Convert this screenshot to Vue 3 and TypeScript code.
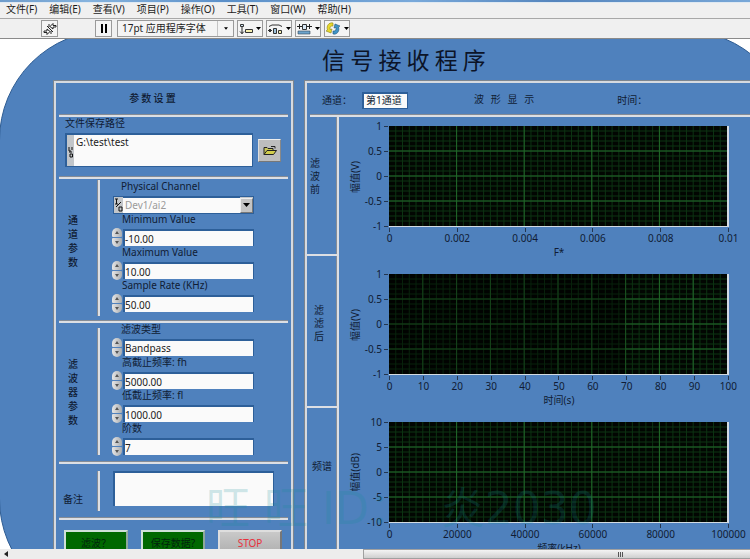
<script setup lang="ts">
import { reactive, ref } from 'vue'

interface NumField {
  id: string
  label: string
  value: string
  step: number
  digits: number
}

interface Chart {
  id: string
  yLabel: string
  xLabel: string
  yTicks: string[]
  xTicks: string[]
  faintUntil: number
}

const menus = ['文件(F)', '编辑(E)', '查看(V)', '项目(P)', '操作(O)', '工具(T)', '窗口(W)', '帮助(H)']

const channelFields = reactive<NumField[]>([
  { id: 'min', label: 'Minimum Value', value: '-10.00', step: 1, digits: 2 },
  { id: 'max', label: 'Maximum Value', value: '10.00', step: 1, digits: 2 },
  { id: 'rate', label: 'Sample Rate (KHz)', value: '50.00', step: 1, digits: 2 },
])

const filterFields = reactive<NumField[]>([
  { id: 'fh', label: '高截止频率: fh', value: '5000.00', step: 100, digits: 2 },
  { id: 'fl', label: '低截止频率: fl', value: '1000.00', step: 100, digits: 2 },
  { id: 'order', label: '阶数', value: '7', step: 1, digits: 0 },
])

const filterTypes = ['Lowpass', 'Highpass', 'Bandpass', 'Bandstop']
const filterType = ref('Bandpass')
const path = ref('G:\\test\\test')
const notes = ref('')
const displayTitle = '波   形   显   示'
const watermark = '旺 旺 ID：  炎2030'

function nudge(field: NumField, dir: number) {
  field.value = (Number(field.value) + dir * field.step).toFixed(field.digits)
}

function cycleType(dir: number) {
  const n = filterTypes.length
  filterType.value = filterTypes[(filterTypes.indexOf(filterType.value) + dir + n) % n]
}

const charts: Chart[] = [
  {
    id: 'raw',
    yLabel: '幅值(V)',
    xLabel: 'F*',
    yTicks: ['1', '0.5', '0', '-0.5', '-1'],
    xTicks: ['0', '0.002', '0.004', '0.006', '0.008', '0.01'],
    faintUntil: 0,
  },
  {
    id: 'filtered',
    yLabel: '幅值(V)',
    xLabel: '时间(s)',
    yTicks: ['1', '0.5', '0', '-0.5', '-1'],
    xTicks: ['0', '10', '20', '30', '40', '50', '60', '70', '80', '90', '100'],
    faintUntil: 70,
  },
  {
    id: 'spectrum',
    yLabel: '幅值(dB)',
    xLabel: '频率(kHz)',
    yTicks: ['10', '5', '0', '-5', '-10'],
    xTicks: ['0', '20000', '40000', '60000', '80000', '100000'],
    faintUntil: 0,
  },
]

const minorX = Array.from({ length: 49 }, (_, i) => (i + 1) * 2)
const minorY = Array.from({ length: 19 }, (_, i) => (i + 1) * 5)
const majorY = [25, 50, 75]

function majorX(c: Chart): number[] {
  const n = c.xTicks.length - 1
  return Array.from({ length: n - 1 }, (_, i) => ((i + 1) * 100) / n)
}
</script>

<template>
  <div class="window">
    <div class="title-edge"></div>
    <nav class="menu" aria-label="主菜单">
      <a v-for="m in menus" :key="m" href="#">{{ m }}</a>
    </nav>

    <div class="toolbar">
      <button class="tool run" aria-label="运行">
        <svg width="14" height="14" viewBox="0 0 14 14">
          <path d="M1 9h3V7l3 2.500-3 3v-2H1zM13 5h-3v2L7 4.500l3-3v2h3z" fill="#fff" stroke="#222" />
          <path d="M4 4l6 6M6 2v3M8 9v3" stroke="#222" fill="none" />
        </svg>
      </button>
      <button class="tool pause" aria-label="暂停">
        <svg width="8" height="9" viewBox="0 0 8 9"><path d="M1 0h2v9H1zM5 0h2v9H5z" fill="#000" /></svg>
      </button>
      <span class="font-pick">
        <select aria-label="字体">
          <option>17pt 应用程序字体</option>
        </select>
        <svg class="caret" width="5" height="3" viewBox="0 0 5 3"><path d="M0 0h5L2.500 3z" /></svg>
      </span>
      <button class="tool wide" aria-label="对齐对象">
        <svg width="14" height="12" viewBox="0 0 14 12">
          <path d="M1.500 1.500h3v2h-3z" fill="#cfe6f5" stroke="#333" />
          <path d="M3 4v7M1 8.500l2 2 2-2" stroke="#222" fill="none" />
          <path d="M6.500 6.500h7v3h-7z" fill="#f6efb0" stroke="#333" />
        </svg>
        <svg class="caret" width="5" height="3" viewBox="0 0 5 3"><path d="M0 0h5L2.500 3z" /></svg>
      </button>
      <button class="tool wide" aria-label="分布对象">
        <svg width="15" height="12" viewBox="0 0 15 12">
          <path d="M1 3.500L4 2h7l3 1.500M0 7.500h4" stroke="#333" fill="none" />
          <path d="M5.500 5.500h3v5h-3z" fill="#9fc3dc" stroke="#333" />
          <path d="M10.500 7.500h3v3h-3z" fill="#f6efb0" stroke="#333" />
          <path d="M1 6h2v3H1z" fill="#333" />
        </svg>
        <svg class="caret" width="5" height="3" viewBox="0 0 5 3"><path d="M0 0h5L2.500 3z" /></svg>
      </button>
      <button class="tool wide" aria-label="调整对象大小">
        <svg width="15" height="12" viewBox="0 0 15 12">
          <path d="M0 3.500h5M10 3.500h5M2.500 1v5M12.500 1v5" stroke="#222" fill="none" />
          <path d="M5.500 1.500h4v5h-4z" fill="#d8e8f4" stroke="#333" />
          <path d="M1 8h12v3H1z" fill="#6da4cc" stroke="#345" stroke-width=".6" />
        </svg>
        <svg class="caret" width="5" height="3" viewBox="0 0 5 3"><path d="M0 0h5L2.500 3z" /></svg>
      </button>
      <button class="tool wide" aria-label="重新排序">
        <svg width="15" height="13" viewBox="0 0 15 13">
          <path d="M7 1C3 0 0 4 1.500 8L0 9l5 2 1-4-2 .500C3.500 5 5 3.500 7 4z" fill="#e8d92c" stroke="#8a7f1a" stroke-width=".6" />
          <path d="M7 12c4 1 7-3 5.500-7L14 4 9 2 8 6l2-.500C10.500 8 9 9.500 7 9z" fill="#3f94c6" stroke="#1f5478" stroke-width=".6" />
        </svg>
        <svg class="caret" width="5" height="3" viewBox="0 0 5 3"><path d="M0 0h5L2.500 3z" /></svg>
      </button>
    </div>

    <main class="canvas">
      <div class="board">
        <h1>信 号 接 收 程 序</h1>
        <div class="columns">
          <section class="box settings">
            <h2>参 数 设 置</h2>
            <hr />
            <div class="path-section">
              <label for="path">文件保存路径</label>
              <div class="path-row">
                <span class="path-field">
                  <svg width="7" height="30" viewBox="0 0 7 30">
                    <path d="M2 12v4h2M5 12v3M3 19h2.500v3H3zM2 17h3" stroke="#111" fill="none" />
                  </svg>
                  <textarea id="path" v-model="path"></textarea>
                </span>
                <button class="browse" aria-label="浏览">
                  <svg width="14" height="11" viewBox="0 0 14 11">
                    <path d="M1 9.500V2.500h3l1 1h5v2" fill="#c9c65a" stroke="#222" />
                    <path d="M1 9.500L4 5.500h9.500L10.500 9.500z" fill="#d2ce4c" stroke="#222" />
                    <path d="M8 1.500h4v2" fill="none" stroke="#222" />
                  </svg>
                </button>
              </div>
            </div>
            <hr />

            <div class="group channel">
              <div class="side"><span>通道参数</span></div>
              <div class="fields">
                <div class="field">
                  <label for="dev">Physical Channel</label>
                  <span class="device">
                    <svg width="9" height="15" viewBox="0 0 9 15">
                      <path d="M1 1h3M2.500 1v5M1 6h3M2 9L7 4M5 9h3v4H5z" stroke="#111" fill="none" />
                    </svg>
                    <select id="dev">
                      <option>Dev1/ai2</option>
                    </select>
                    <span class="drop"><svg width="7" height="4" viewBox="0 0 7 4"><path d="M0 0h7L3.500 4z" /></svg></span>
                  </span>
                </div>
                <div v-for="f in channelFields" :key="f.id" class="field">
                  <label :for="f.id">{{ f.label }}</label>
                  <div class="spin-row">
                    <span class="spin">
                      <button aria-label="增大" @click="nudge(f, 1)"><svg width="4" height="3" viewBox="0 0 4 3"><path d="M2 0l2 3H0z" /></svg></button>
                      <button aria-label="减小" @click="nudge(f, -1)"><svg width="4" height="3" viewBox="0 0 4 3"><path d="M0 0h4L2 3z" /></svg></button>
                    </span>
                    <input :id="f.id" v-model="f.value" type="text" />
                  </div>
                </div>
              </div>
            </div>
            <hr />

            <div class="group filter">
              <div class="side"><span>滤波器参数</span></div>
              <div class="fields">
                <div class="field">
                  <label for="ftype">滤波类型</label>
                  <div class="spin-row">
                    <span class="spin">
                      <button aria-label="上一项" @click="cycleType(-1)"><svg width="4" height="3" viewBox="0 0 4 3"><path d="M2 0l2 3H0z" /></svg></button>
                      <button aria-label="下一项" @click="cycleType(1)"><svg width="4" height="3" viewBox="0 0 4 3"><path d="M0 0h4L2 3z" /></svg></button>
                    </span>
                    <select id="ftype" v-model="filterType">
                      <option v-for="t in filterTypes" :key="t">{{ t }}</option>
                    </select>
                  </div>
                </div>
                <div v-for="f in filterFields" :key="f.id" class="field">
                  <label :for="f.id">{{ f.label }}</label>
                  <div class="spin-row">
                    <span class="spin">
                      <button aria-label="增大" @click="nudge(f, 1)"><svg width="4" height="3" viewBox="0 0 4 3"><path d="M2 0l2 3H0z" /></svg></button>
                      <button aria-label="减小" @click="nudge(f, -1)"><svg width="4" height="3" viewBox="0 0 4 3"><path d="M0 0h4L2 3z" /></svg></button>
                    </span>
                    <input :id="f.id" v-model="f.value" type="text" />
                  </div>
                </div>
              </div>
            </div>
            <hr />

            <div class="group notes">
              <div class="side"><label for="notes">备注</label></div>
              <textarea id="notes" v-model="notes"></textarea>
            </div>
            <hr />

            <div class="actions">
              <button class="green">滤波？</button>
              <button class="green">保存数据?</button>
              <button class="stop">STOP</button>
            </div>
          </section>

          <section class="box display">
            <header>
              <label for="ch">通道：</label>
              <select id="ch">
                <option>第1通道</option>
              </select>
              <h2>{{ displayTitle }}</h2>
              <span>时间：</span>
            </header>
            <hr />
            <div class="plots">
              <div class="rail">
                <div class="cell before"><span>滤波前</span></div>
                <div class="cell after"><span>滤滤后</span></div>
                <div class="cell freq"><span>频谱</span></div>
              </div>
              <div class="charts">
                <figure v-for="c in charts" :key="c.id" class="chart">
                  <div class="y-label"><span>{{ c.yLabel }}</span></div>
                  <div class="y-ticks"><span v-for="t in c.yTicks" :key="t">{{ t }}</span></div>
                  <svg class="plot" viewBox="0 0 100 100" preserveAspectRatio="none">
                    <g class="minor">
                      <line v-for="x in minorX" :key="'x' + x" :x1="x" :x2="x" y1="0" y2="100" />
                      <line v-for="y in minorY" :key="'y' + y" x1="0" x2="100" :y1="y" :y2="y" />
                    </g>
                    <g class="major">
                      <line v-for="x in majorX(c)" :key="'x' + x" :x1="x" :x2="x" y1="0" y2="100" />
                      <line v-for="y in majorY" :key="'y' + y" x1="0" x2="100" :y1="y" :y2="y" />
                    </g>
                    <rect v-if="c.faintUntil" :width="c.faintUntil" height="100" fill="#000" opacity=".35" />
                  </svg>
                  <div class="x-ticks"><span v-for="t in c.xTicks" :key="t">{{ t }}</span></div>
                  <figcaption>{{ c.xLabel }}</figcaption>
                </figure>
              </div>
            </div>
          </section>
        </div>
      </div>
      <div class="watermark">{{ watermark }}</div>
    </main>

    <div class="scrollbar">
      <svg width="4" height="6" viewBox="0 0 4 6"><path d="M4 0v6L0 3z" fill="#222" /></svg>
      <div class="thumb"><i></i><i></i><i></i></div>
    </div>
  </div>
</template>

<style>
body {
  margin: 0;
  overflow: hidden;
}
</style>

<style scoped>
* {
  box-sizing: border-box;
}

.window {
  display: flex;
  flex-direction: column;
  height: 100vh;
  overflow: hidden;
  background: #f0f0f0;
  color: #101c34;
  font: 10px/13px 'Noto Sans', 'Noto Sans CJK SC', sans-serif;
}

button,
input,
select,
textarea {
  margin: 0;
  padding: 0;
  border: 0;
  border-radius: 0;
  font: inherit;
  color: inherit;
  appearance: none;
  outline: none;
}

svg {
  display: block;
  flex: none;
}

.title-edge {
  flex: none;
  height: 3px;
  background: linear-gradient(90deg, #6f9ccb, #86b3de 12%, #5b8fc8 30%, #79a9da 55%, #5585bd 74%, #79a8d8);
  border-bottom: 1px solid #dfe9f2;
}

.menu {
  display: flex;
  flex: none;
  gap: 12px;
  height: 16px;
  padding-left: 6px;
  border-bottom: 1px solid #a8a8a8;
}

.menu a {
  color: #1c1c1c;
  text-decoration: none;
}

.toolbar {
  display: flex;
  flex: none;
  align-items: center;
  gap: 3px;
  height: 20px;
  padding-left: 41px;
  border-bottom: 1px solid #8a8a8a;
}

.tool,
.font-pick {
  display: flex;
  align-items: center;
  justify-content: center;
  width: 17px;
  height: 17px;
  border: 1px solid #9a9a9a;
  background: #f4f4f4;
}

.run {
  margin-right: 34px;
}

.pause {
  margin-right: 2px;
}

.wide {
  gap: 3px;
  width: 26px;
}

.font-pick {
  width: 117px;
  padding-right: 5px;
}

.font-pick select {
  flex: 1;
  height: 15px;
  padding-left: 4px;
  background: transparent;
  color: #222;
}

.font-pick .caret {
  width: 11px;
  height: 15px;
  padding: 6px 0 6px 6px;
  border-left: 1px solid #c4c4c4;
}

.canvas {
  position: relative;
  flex: 1;
  min-height: 0;
  overflow: hidden;
  background: #fff;
}

.board {
  margin: -9px -43px 0 -1px;
  padding: 8px 0 36px 54px;
  border: 1px solid #2e5c92;
  border-radius: 110px;
  background: #4f81bd;
}

h1 {
  margin: 0;
  padding: 0 76px 2px 38px;
  font: 23px/40px 'Noto Sans CJK SC', sans-serif;
  color: #0c1428;
  text-align: center;
}

h2 {
  margin: 0;
  font: 10px/13px 'Noto Sans CJK SC', sans-serif;
  white-space: pre;
}

hr {
  width: auto;
  height: 3px;
  margin: 0 3px;
  border: 0;
  border-top: 1px solid #858c96;
  background: #dcdfe4;
}

.columns {
  display: grid;
  grid-template-columns: 239px 1fr;
  gap: 12px;
}

.box {
  border: 2px solid #d6dae0;
  box-shadow: 0 0 0 1px #7c858f;
}

.settings h2 {
  height: 31px;
  padding-top: 8px;
  padding-right: 42px;
  font-weight: 500;
  text-align: center;
}

.path-section {
  padding: 0 0 9px 9px;
}

.path-section label {
  display: block;
}

.path-row {
  display: flex;
  align-items: center;
  gap: 5px;
  margin-top: 3px;
}

.path-field {
  display: flex;
  width: 188px;
  height: 34px;
  border: 2px solid #2d5f99;
  border-width: 2px 1px 1px 2px;
  background: #c2c6ca;
}

.path-field textarea {
  flex: 1;
  min-width: 0;
  padding: 1px 2px;
  background: #fafafa;
  color: #222;
  resize: none;
}

.browse {
  display: grid;
  place-items: center;
  width: 23px;
  height: 23px;
  border: 1px solid;
  border-color: #eee #888 #777 #ddd;
  background: #bdbdbd;
}

.group {
  display: flex;
}

.side {
  display: flex;
  align-items: center;
  justify-content: center;
  width: 44px;
  padding-right: 8px;
  border-right: 2px solid #dcdfe4;
  box-shadow: inset -1px 0 #858c96;
}

.side span {
  width: 10px;
  line-height: 14px;
  font-weight: 500;
  word-break: break-all;
}

.channel {
  padding: 1px 0 8px;
}

.filter {
  padding-bottom: 6px;
}

.channel .side {
  margin-bottom: -4px;
  padding-bottom: 14px;
}

.filter .side {
  margin-top: 5px;
}

.fields {
  padding-left: 12px;
}

.field {
  width: 142px;
  height: 33px;
}

.field label {
  display: block;
  height: 16px;
  padding-left: 10px;
  white-space: nowrap;
}

.field:first-child label {
  padding-left: 9px;
}

.spin-row {
  display: flex;
  align-items: center;
  gap: 1px;
  height: 17px;
}

.spin-row input,
.spin-row select,
.device select {
  flex: 1;
  min-width: 0;
  height: 17px;
  border: solid #2d5f99;
  border-width: 2px 1px 0 2px;
  background: #fafafa;
  color: #222;
  line-height: 15px;
}

.spin {
  display: grid;
  gap: 1px;
  width: 10px;
}

.spin button {
  display: grid;
  place-items: center;
  height: 9px;
  background: linear-gradient(90deg, #e6e6e6, #a8acb0);
  border-radius: 5px 5px 1px 1px;
}

.spin button + button {
  border-radius: 1px 1px 5px 5px;
}

.spin path {
  fill: #555;
}

.device {
  display: flex;
  align-items: center;
  height: 18px;
  margin-left: 1px;
  border: 1px solid #2d5f99;
  background: #c2c6ca;
}

.device select {
  height: 16px;
  padding-left: 2px;
  border-width: 1px 0 0;
  color: #9a9a9a;
}

.drop {
  display: grid;
  place-items: center;
  width: 13px;
  height: 15px;
  border: 1px solid;
  border-color: #eee #777 #777 #eee;
  background: #c4c4c4;
}

.notes {
  padding: 7px 0 11px;
}

.notes .side {
  align-items: flex-end;
  margin-bottom: -5px;
  padding-bottom: 5px;
}

.notes textarea {
  width: 161px;
  height: 35px;
  margin-left: 13px;
  border: solid #2d5f99;
  border-width: 2px 1px 0 2px;
  background: #fafafa;
  resize: none;
}

.actions {
  display: flex;
  gap: 13px;
  padding: 10px 8px;
}

.actions button {
  width: 64px;
  height: 26px;
  border: 2px solid;
}

.actions .green {
  border-color: #cfe0d8 #8ea89c #8ea89c #cfe0d8;
  background: #006800;
  color: #00240c;
}

.actions .stop {
  border-color: #dedede #777 #777 #dedede;
  background: linear-gradient(#c9c9c9, #aeaeae);
  color: #e8303c;
}

.display header {
  display: flex;
  align-items: center;
  height: 31px;
  padding: 3px 0 0 15px;
}

.display header label {
  width: 40px;
}

.display header select {
  width: 46px;
  height: 17px;
  padding-left: 2px;
  border: solid #2d5f99;
  border-width: 2px 1px 1px 2px;
  background: #fafafa;
}

.display header h2 {
  margin: 0 83px 4px 66px;
}

.plots {
  display: flex;
}

.rail {
  display: flex;
  flex: none;
  flex-direction: column;
  width: 32px;
  border-right: 2px solid #dcdfe4;
  box-shadow: inset -1px 0 #858c96;
}

.cell {
  display: flex;
  justify-content: center;
  height: 152px;
  padding-top: 52px;
  border-bottom: 2px solid #dcdfe4;
}

.cell.before {
  height: 139px;
  padding: 40px 14px 0 0;
}

.cell.after {
  padding: 48px 6px 0 0;
}

.cell:last-child {
  flex: 1;
  border-bottom: 0;
}

.before span,
.after span {
  width: 10px;
  word-break: break-all;
}

.charts {
  flex: 1;
  min-width: 0;
  padding: 9px 61px 0 8px;
}

.chart {
  display: grid;
  grid-template-columns: 16px 26px 1fr;
  grid-template-rows: 101px 19px 15px;
  height: 148px;
  margin: 0;
}

.y-label {
  display: grid;
  place-items: center;
}

.y-label span {
  writing-mode: vertical-rl;
  text-orientation: sideways;
  transform: rotate(180deg);
  white-space: nowrap;
}

.y-ticks {
  display: flex;
  flex-direction: column;
  justify-content: space-between;
}

.y-ticks span {
  display: flex;
  align-items: center;
  justify-content: flex-end;
  gap: 2px;
  height: 1px;
  padding-right: 1px;
}

.y-ticks span::after {
  content: '';
  width: 4px;
  height: 1px;
  background: #24364f;
}

.plot {
  width: 100%;
  height: 101px;
  border: solid #d3dbe2;
  border-width: 0 2px 1px 0;
  background: #020602;
}

.plot line {
  stroke-width: 1px;
  vector-effect: non-scaling-stroke;
}

.minor line {
  stroke: #0d3413;
}

.major line {
  stroke: #22682a;
}

.x-ticks {
  display: flex;
  grid-column: 3;
  justify-content: space-between;
}

.x-ticks span {
  display: flex;
  flex-direction: column;
  align-items: center;
  width: 1px;
  padding-top: 1px;
}

.x-ticks span::before {
  content: '';
  flex: none;
  width: 1px;
  height: 4px;
  background: #24364f;
}

figcaption {
  grid-column: 3;
  text-align: center;
}

.watermark {
  position: absolute;
  bottom: 12px;
  left: 206px;
  font: 44px/56px 'DejaVu Sans', 'Noto Sans CJK SC', sans-serif;
  color: rgba(20, 140, 150, 0.2);
  white-space: pre;
  pointer-events: none;
}

.scrollbar {
  display: flex;
  flex: none;
  align-items: center;
  height: 10px;
  padding-left: 4px;
  background: #ededed;
}

.thumb {
  display: flex;
  align-items: center;
  justify-content: center;
  gap: 1px;
  width: 69%;
  height: 10px;
  margin: 0 -128px 0 auto;
  border: 1px solid #a0a0a0;
  background: linear-gradient(#f4f4f4, #cfcfcf);
}

.thumb i {
  width: 1px;
  height: 5px;
  background: #555;
}
</style>
